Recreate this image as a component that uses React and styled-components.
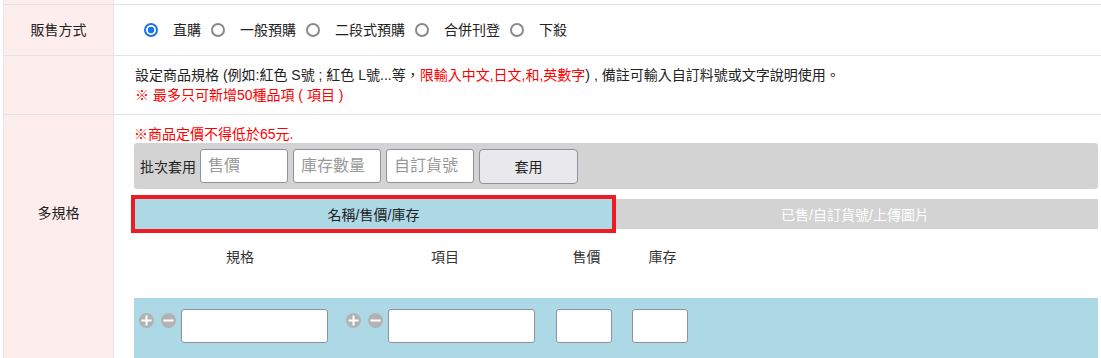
import React from "react";
import styled, { createGlobalStyle } from "styled-components";

const GlobalStyle = createGlobalStyle`
  html, body {
    margin: 0;
    padding: 0;
    background: #fff;
  }
  body {
    font-family: "Liberation Sans", "Noto Sans CJK TC", sans-serif;
    font-size: 14px;
    color: #222;
  }
`;

const Table = styled.div`
  margin-left: 3px;
  border-left: 1px solid #e6e6e6;
  height: 358px;
  overflow: hidden;
`;

const Row = styled.div`
  display: grid;
  grid-template-columns: 110px 1fr;
  border-bottom: 1px solid #e4e4e4;
  height: ${(p) => p.$h || "auto"};
`;

const Label = styled.div`
  background: #feeded;
  border-right: 1px solid #ece4e4;
  display: flex;
  justify-content: center;
  align-items: ${(p) => (p.$top ? "flex-start" : "center")};
  padding-top: ${(p) => p.$top || 0}px;
  line-height: 20px;
  color: #222;
`;

const Cell = styled.div`
  padding: ${(p) => p.$pad || "0 3px 0 20px"};
  min-width: 0;
`;

const RadioGroup = styled.div`
  display: flex;
  align-items: center;
  height: 100%;
  padding-left: 10px;
`;

const Radio = styled.input.attrs({ type: "radio", name: "sale" })`
  appearance: none;
  box-sizing: border-box;
  width: 14px;
  height: 14px;
  margin: 0 15px 0 0;
  border-radius: 50%;
  border: 2px solid #8a8a8e;
  background: #fff;

  &:checked {
    border-color: #1a73e8;
    background: radial-gradient(circle, #1a73e8 0 3.2px, #fff 3.6px);
  }
`;

const RadioText = styled.span`
  margin-right: 10px;
  line-height: 20px;
`;

const Line = styled.div`
  line-height: 20px;
  color: ${(p) => p.$color || "#222"};
  white-space: nowrap;
`;

const Red = styled.span`
  color: #f00;
`;

const Note = styled.div`
  color: #f00;
  line-height: 18px;
`;

const Batch = styled.div`
  display: flex;
  align-items: center;
  height: 46px;
  background: #d3d3d3;
  border-radius: 3px;
  padding: 0 6px;
  gap: 5px;
`;

const BatchLabel = styled.span`
  margin-right: -1px;
  color: #222;
`;

const Field = styled.input`
  box-sizing: border-box;
  width: ${(p) => p.$w || 88}px;
  height: ${(p) => p.$hgt || 34}px;
  border: 1px solid #8f8f9d;
  border-radius: 3px;
  background: #fff;
  padding: 0 7px;
  font: inherit;
  font-size: 16px;
  color: #222;
  outline: none;

  &::placeholder {
    color: #999;
  }
`;

const Button = styled.button`
  box-sizing: border-box;
  width: 99px;
  height: 35px;
  background: #e9e9ed;
  border: 1px solid #8f8f9d;
  border-radius: 4px;
  font: inherit;
  font-size: 14px;
  color: #222;
  cursor: pointer;
`;

const Tabs = styled.div`
  display: flex;
  margin: 10px 0 0 1px;
  height: 30px;
`;

const Tab = styled.div`
  display: flex;
  align-items: center;
  justify-content: center;
  flex: ${(p) => (p.$active ? "0 0 477px" : "1")};
  background: ${(p) => (p.$active ? "#add8e6" : "#d3d3d3")};
  color: ${(p) => (p.$active ? "#222" : "#fff")};
  outline: ${(p) => (p.$active ? "4px solid #ed1c24" : "none")};
  position: relative;
  z-index: ${(p) => (p.$active ? 1 : 0)};
`;

const Columns = styled.div`
  display: grid;
  grid-template-columns: 207px 203px 80px 72px;
  align-items: start;
`;

const HeadRow = styled(Columns)`
  margin-top: 18px;
  line-height: 20px;
  color: #333;
`;

const Head = styled.div`
  text-align: center;
  padding-left: 5px;
`;

const DataRow = styled(Columns)`
  margin-top: 31px;
  background: #add8e6;
  padding: 11px 0 30px;
`;

const SpecCell = styled.div`
  display: flex;
  align-items: flex-start;
  padding-left: 5px;
`;

const CenterCell = styled.div`
  display: flex;
  justify-content: center;
`;

const IconBtn = styled.span`
  display: inline-flex;
  margin: 4px ${(p) => p.$gap}px 0 0;
  cursor: pointer;
`;

const PlusIcon = () => (
  <svg width="15" height="15" viewBox="0 0 15 15">
    <circle cx="7.5" cy="7.5" r="7.5" fill="#b2b2b2" />
    <path d="M7.5 2.5v10M2.5 7.5h10" stroke="#fff" strokeWidth="2" />
  </svg>
);

const MinusIcon = () => (
  <svg width="15" height="15" viewBox="0 0 15 15">
    <circle cx="7.5" cy="7.5" r="7.5" fill="#b2b2b2" />
    <path d="M2.5 7.5h10" stroke="#fff" strokeWidth="2" />
  </svg>
);

const saleTypes = ["直購", "一般預購", "二段式預購", "合併刊登", "下殺"];

export default function App() {
  return (
    <>
      <GlobalStyle />
      <Table>
        <Row $h="4px">
          <Label />
          <Cell />
        </Row>
        <Row $h="50px">
          <Label>販售方式</Label>
          <Cell>
            <RadioGroup>
              {saleTypes.map((t, i) => (
                <React.Fragment key={t}>
                  <Radio defaultChecked={i === 0} />
                  <RadioText>{t}</RadioText>
                </React.Fragment>
              ))}
            </RadioGroup>
          </Cell>
        </Row>
        <Row>
          <Label />
          <Cell $pad="9px 3px 9px 21px">
            <Line>
              設定商品規格 (例如:紅色 S號 ; 紅色 L號...等，
              <Red>限輸入中文,日文,和,英數字</Red>) , 備註可輸入自訂料號或文字說明使用。
            </Line>
            <Line $color="#f00">※ 最多只可新增50種品項 ( 項目 )</Line>
          </Cell>
        </Row>
        <Row>
          <Label $top={88}>多規格</Label>
          <Cell $pad="10px 3px 0 20px">
            <Note>※商品定價不得低於65元.</Note>
            <Batch>
              <BatchLabel>批次套用</BatchLabel>
              <Field placeholder="售價" />
              <Field placeholder="庫存數量" />
              <Field placeholder="自訂貨號" />
              <Button>套用</Button>
            </Batch>
            <Tabs>
              <Tab $active>名稱/售價/庫存</Tab>
              <Tab>已售/自訂貨號/上傳圖片</Tab>
            </Tabs>
            <HeadRow>
              <Head>規格</Head>
              <Head>項目</Head>
              <Head>售價</Head>
              <Head>庫存</Head>
            </HeadRow>
            <DataRow>
              <SpecCell>
                <IconBtn $gap={7}><PlusIcon /></IconBtn>
                <IconBtn $gap={5}><MinusIcon /></IconBtn>
                <Field $w={147} $hgt={34} />
              </SpecCell>
              <SpecCell>
                <IconBtn $gap={7}><PlusIcon /></IconBtn>
                <IconBtn $gap={5}><MinusIcon /></IconBtn>
                <Field $w={147} $hgt={34} />
              </SpecCell>
              <CenterCell>
                <Field $w={56} $hgt={34} />
              </CenterCell>
              <CenterCell>
                <Field $w={56} $hgt={34} />
              </CenterCell>
            </DataRow>
          </Cell>
        </Row>
      </Table>
    </>
  );
}
